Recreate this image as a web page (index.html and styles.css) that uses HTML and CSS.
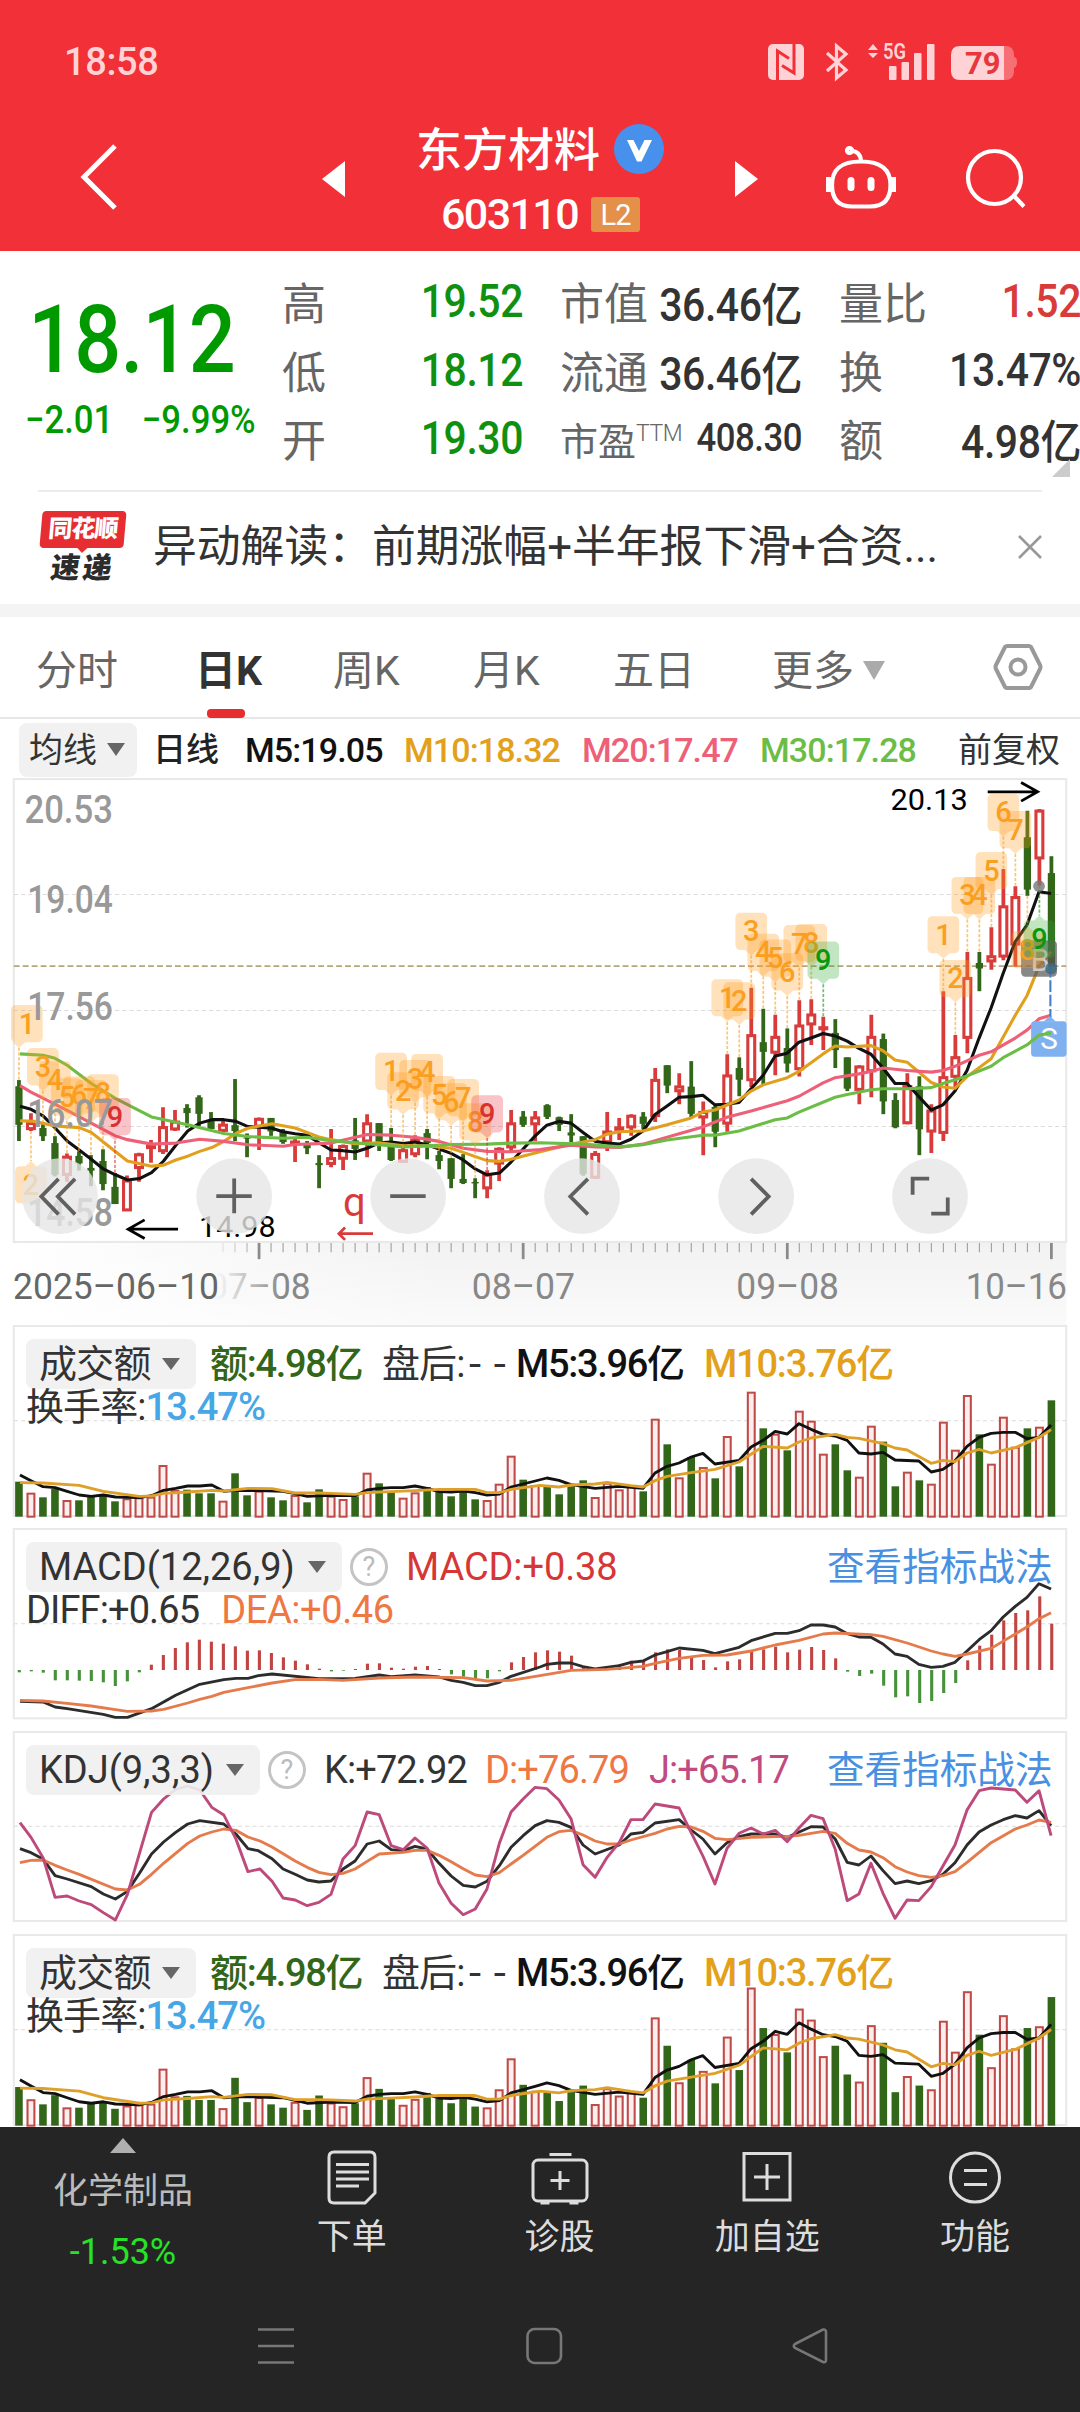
FILE: index.html
```html
<!DOCTYPE html>
<html lang="zh-CN">
<head>
<meta charset="utf-8">
<title>东方材料 603110</title>
<link rel="stylesheet" href="styles.css">
</head>
<body>
<header class="top">
  <div class="status">
    <span class="clock">18:58</span>
    <svg class="status-icons" width="252" height="40" viewBox="766 42 252 40">
      <g fill="#ffd3d6">
        <rect x="768" y="44" width="36" height="36" rx="5"/>
        <path d="M777.500 80V51L789 58.500M794 44V73L782 65.500" fill="none" stroke="#f13038" stroke-width="3"/>
        <path d="M827 53L846 70L836.500 78V46L846 54L827 71" fill="none" stroke="#ffd3d6" stroke-width="3.200"/>
        <path d="M868 50L873 44L878 50ZM868 53L873 58L878 53Z"/>
        <rect x="889" y="66" width="7.500" height="14" rx="1"/><rect x="901.500" y="62" width="7.500" height="18" rx="1"/><rect x="914" y="53" width="7.500" height="27" rx="1"/><rect x="927" y="44" width="7.500" height="36" rx="1"/>
        <path d="M1004 46h2q7 0 8 8v3q3 0 3 5t-3 6v4q-1 8-8 8h-2z" fill="#f56f75"/>
        <path d="M960 46h44v34h-44q-9 0-9-9v-16q0-9 9-9z"/>
        <text x="883" y="59" font-size="22" font-weight="600" textLength="23" lengthAdjust="spacingAndGlyphs">5G</text>
        <text x="965" y="74" font-size="31" font-weight="700" fill="#e8363e">79</text>
      </g>
    </svg>
  </div>
  <div class="titlebar">
    <svg class="back" width="40" height="70" viewBox="0 0 40 70"><path d="M35 4L4 35L35 66" fill="none" stroke="#fff" stroke-width="5"/></svg>
    <svg class="prev" width="23" height="36" viewBox="0 0 23 36"><path d="M23 0V36L0 18Z" fill="#fff"/></svg>
    <div class="stock">
      <div class="name">东方材料<svg width="50" height="50" viewBox="0 0 50 50"><circle cx="25" cy="25" r="25" fill="#4790ec"/><path d="M13 16H19.500L25 27L30.500 16H38L27.500 37.500H23Z" fill="#fff"/></svg></div>
      <div class="code"><span>603110</span><b>L2</b></div>
    </div>
    <svg class="next" width="23" height="36" viewBox="0 0 23 36"><path d="M0 0V36L23 18Z" fill="#fff"/></svg>
    <svg class="robot" width="72" height="68" viewBox="825 143 72 68" fill="none" stroke="#fff" stroke-width="4.200"><path d="M861 161.500C883 161.500 890.500 171 890.500 185C890.500 201 882 206.500 870 206.500H852C840 206.500 832 201 832 185C832 171 839 161.500 861 161.500ZM861 161C860.500 154 857 151 851 151"/><circle cx="849.500" cy="150.500" r="2.500"/><path d="M828.500 177v15M893.500 177v15" stroke-width="5"/><path d="M851 180.500v7M871 180.500v7" stroke-width="7" stroke-linecap="round"/></svg>
    <svg class="search" width="64" height="64" viewBox="963 146 64 64" fill="none" stroke="#fff" stroke-width="4.200"><circle cx="994.500" cy="177.500" r="26.500"/><path d="M1014 196L1024 206.500"/></svg>
  </div>
</header>

<section class="quote">
  <div class="price">
    <div class="last">18.12</div>
    <div class="delta"><span>−2.01</span><span>−9.99%</span></div>
  </div>
  <dl class="stats c1"><dt>高</dt><dd class="down">19.52</dd><dt>低</dt><dd class="down">18.12</dd><dt>开</dt><dd class="down">19.30</dd></dl>
  <dl class="stats c2"><dt>市值</dt><dd>36.46亿</dd><dt>流通</dt><dd>36.46亿</dd><dt class="small">市盈<sup>TTM</sup></dt><dd class="small">408.30</dd></dl>
  <dl class="stats c3"><dt>量比</dt><dd class="up">1.52</dd><dt>换</dt><dd>13.47%</dd><dt>额</dt><dd>4.98亿</dd></dl>
  <i class="corner"></i>
</section>

<section class="news">
  <div class="logo"><b>同花顺</b><i>速递</i></div>
  <p>异动解读：前期涨幅+半年报下滑+合资...</p>
  <svg width="24" height="24" viewBox="0 0 24 24"><path d="M1 1L23 23M23 1L1 23" stroke="#999" stroke-width="2.600"/></svg>
</section>

<nav class="tabs">
  <span>分时</span><span class="on">日K</span><span>周K</span><span>月K</span><span>五日</span><span>更多<i class="tri"></i></span>
  <svg width="50" height="48" viewBox="0 0 50 48" fill="none" stroke="#999" stroke-width="4"><path d="M14 3H36Q37 3 38 4L47 22Q48 24 47 26L38 44Q37 45 36 45H14Q13 45 12 44L3 26Q2 24 3 22L12 4Q13 3 14 3Z"/><circle cx="25" cy="24" r="7.500"/></svg>
</nav>

<div class="ma">
  <span class="chip">均线<i class="tri"></i></span>
  <span class="dk">日线</span><span class="n k">M5:19.05</span><span class="n o">M10:18.32</span><span class="n p">M20:17.47</span><span class="n g">M30:17.28</span><span class="fq">前复权</span>
</div>

<svg class="main" id="kline" width="1080" height="548" viewBox="0 23 3136 1591"></svg>

<section class="panel">
  <svg class="plot" data-chart="volume" viewBox="0 47 3136 570" preserveAspectRatio="none"></svg>
  <div class="row"><span class="chip">成交额<i class="tri"></i></span><span class="n dg a1">额:4.98亿</span><span class="a2">盘后:<em>--</em></span><span class="n k a3">M5:3.96亿</span><span class="n o a4">M10:3.76亿</span></div>
  <div class="row2"><span>换手率:</span><span class="n b">13.47%</span></div>
</section>

<section class="panel">
  <svg class="plot" data-chart="macd" viewBox="0 656 3136 570" preserveAspectRatio="none"></svg>
  <div class="row"><span class="chip wide">MACD(12,26,9)<i class="tri"></i></span><span class="help">?</span><span class="r m1">MACD:+0.38</span><a>查看指标战法</a></div>
  <div class="row2"><span>DIFF:+0.65</span><span class="or m2">DEA:+0.46</span></div>
</section>

<section class="panel">
  <svg class="plot" data-chart="kdj" viewBox="0 36 3136 570" preserveAspectRatio="none"></svg>
  <div class="row"><span class="chip mid">KDJ(9,3,3)<i class="tri"></i></span><span class="help">?</span><span class="k1">K:+72.92</span><span class="or k2">D:+76.79</span><span class="pu k3">J:+65.17</span><a>查看指标战法</a></div>
</section>

<section class="panel last-panel">
  <svg class="plot" data-chart="volume2" viewBox="0 47 3136 570" preserveAspectRatio="none"></svg>
  <div class="row"><span class="chip">成交额<i class="tri"></i></span><span class="n dg a1">额:4.98亿</span><span class="a2">盘后:<em>--</em></span><span class="n k a3">M5:3.96亿</span><span class="n o a4">M10:3.76亿</span></div>
  <div class="row2"><span>换手率:</span><span class="n b">13.47%</span></div>
</section>

<footer class="bottom">
  <div class="actions">
    <div class="sector"><i></i><span>化学制品</span><b>-1.53%</b></div>
    <div class="act"><svg width="60" height="60" viewBox="322 2147 60 60"><path d="M334 2152H370Q375 2152 375 2157V2193L365 2203H334Q329 2203 329 2198V2157Q329 2152 334 2152Z"/><path d="M336 2164.500H369M336 2172H369M336 2179H369M336 2186H359"/></svg><span>下单</span></div>
    <div class="act"><svg width="60" height="60" viewBox="529.500 2147 60 60"><rect x="532.500" y="2160" width="54" height="41" rx="5"/><path d="M549 2154.500H571M559.500 2171V2190M550 2180.500H569M540 2203H549M569 2203H578"/></svg><span>诊股</span></div>
    <div class="act"><svg width="60" height="60" viewBox="737 2147 60 60"><rect x="744" y="2153.500" width="46" height="46.500"/><path d="M767 2164V2190M754 2177H780"/></svg><span>加自选</span></div>
    <div class="act"><svg width="60" height="60" viewBox="945 2147 60 60"><circle cx="975" cy="2177.500" r="24.500"/><path d="M964 2170.500H987M964 2184.500H987"/></svg><span>功能</span></div>
  </div>
  <svg class="sys" width="1080" height="60" viewBox="0 2316 1080 60" fill="none" stroke="#777" stroke-width="2.600"><path d="M258 2329.500H294M258 2346H294M258 2362.500H294"/><rect x="527.500" y="2329" width="33.500" height="34" rx="7"/><path d="M795 2344L823 2329.500Q826 2329 826 2332V2360Q826 2363 823 2362L795 2348Q792.500 2346 795 2344Z"/></svg>
</footer>
<script src="charts.js"></script>
</body>
</html>
```
FILE: styles.css
```css
* { box-sizing: border-box; }
body { margin: 0; width: 1080px; height: 2412px; overflow: hidden; background: #fff; color: #333; font-family: Roboto, "Noto Sans CJK SC", sans-serif; }
svg { display: block; flex: none; }
b, i, em { font-style: normal; }
span { white-space: nowrap; }

.top { height: 251px; background: #f13038; color: #fff; }
.status { display: flex; justify-content: space-between; padding: 42px 62px 0 64px; height: 101px; }
.clock { font-size: 38px; line-height: 40px; color: #ffd3d6; font-weight: 500; letter-spacing: -.4px; }
.titlebar { display: flex; align-items: flex-start; }
.back { margin: 41px 0 0 80px; }
.prev { margin: 60px 0 0 202px; }
.stock { width: 390px; padding-left: 71px; }
.name { display: flex; align-items: center; gap: 12px; font-size: 46px; line-height: 54px; font-weight: 500; margin-top: 22px; }
.name svg { margin: -2px 0 0 2px; }
.code { display: flex; align-items: center; gap: 13px; padding-left: 25px; margin-top: 14px; height: 46px; }
.code span { font-size: 43px; font-weight: 500; letter-spacing: -1.600px; }
.code b { width: 49px; height: 35px; background: #e49048; border-radius: 3px; font-weight: 400; font-size: 29px; line-height: 36px; text-align: center; letter-spacing: -1px; }
.next { margin-top: 60px; }
.robot { margin: 42px 0 0 67px; }
.search { margin: 45px 0 0 66px; }

.quote { position: relative; display: flex; height: 241px; padding-top: 16px; }
.quote::after { content: ""; position: absolute; left: 38px; right: 38px; bottom: 0; height: 2px; background: #ebebeb; }
.price { width: 282px; color: #090; }
.last { font-size: 94px; line-height: 100px; font-weight: 500; letter-spacing: -1px; padding: 23px 0 0 32px; transform: scaleX(.88); transform-origin: 0 0; }
.delta { display: flex; gap: 32px; padding-left: 28px; font-size: 39px; line-height: 60px; font-weight: 500; width: 320px; transform: scaleX(.89); transform-origin: 0 0; }
.stats { margin: 0; display: grid; grid-template-columns: 44px 1fr; grid-auto-rows: 68.500px; align-items: center; font-size: 46px; }
.stats dt { color: #666; font-size: 44px; white-space: nowrap; }
.stats dd { margin: 0; text-align: right; font-weight: 500; letter-spacing: -.5px; white-space: nowrap; transform: scaleX(.89); transform-origin: 100% 0; }
.stats .down { color: #109010; }
.stats .up { color: #d93a3a; }
.stats dt.small { font-size: 38px; }
.stats dd.small { font-size: 39px; }
.stats sup { font-size: 23px; font-weight: 300; letter-spacing: -.5px; vertical-align: 14px; line-height: 0; }
.c1 { width: 241px; }
.c2 { width: 242px; margin-left: 37px; }
.c3 { width: 242px; margin: 0 -4px 0 37px; }
.corner { position: absolute; right: 10px; bottom: 15px; border: solid transparent; border-width: 0 0 18px 18px; border-bottom-color: #ccc; }

.news { display: flex; align-items: center; height: 125px; padding: 0 38px 0 39px; border-bottom: 13px solid #f4f4f4; }
.logo { width: 88px; display: flex; flex-direction: column; align-items: center; }
.logo b { position: relative; width: 84px; height: 37px; background: #e62e32; border-radius: 4px; transform: skewX(-5deg); color: #fff; font-size: 24px; line-height: 36px; font-weight: 900; text-align: center; letter-spacing: -1px; }
.logo b::after { content: ""; position: absolute; left: 37px; top: 36px; border: solid transparent; border-width: 6px 6px 0; border-top-color: #e62e32; }
.logo i { font-size: 29px; line-height: 34px; margin-top: 3px; font-weight: 900; letter-spacing: 3px; transform: skewX(-8deg); color: #2c2c2c; }
.news p { margin: 0 auto 2px 26px; font-size: 43.800px; line-height: 60px; white-space: nowrap; }
.news svg { margin-bottom: 2px; }

.tri { display: inline-block; border: solid transparent; border-width: 13px 9.500px 0; border-top-color: #666; }
.tabs { display: flex; align-items: center; height: 102px; border-bottom: 2px solid #e6e6e6; padding: 0 37px 0 36px; font-size: 41px; color: #666; }
.tabs span { position: relative; width: 140px; }
.tabs span:first-child { width: 159px; }
.tabs span:nth-child(2) { width: 138px; }
.tabs span:nth-child(5) { width: 159px; }
.tabs span:nth-child(6) { width: auto; }
.tabs svg { margin-left: auto; margin-top: 0; }
.tabs .on { font-weight: 700; color: #333; }
.tabs .on::after { content: ""; position: absolute; left: 12px; bottom: -21px; width: 38px; height: 9px; border-radius: 4px; background: #e62e30; }
.tabs .tri { border-width: 19px 11.500px 0; border-top-color: #aaa; margin-left: 9px; vertical-align: 5px; }

.ma { display: flex; align-items: center; height: 59px; padding: 2px 20px 0 19px; font-size: 34px; line-height: 50px; }
.chip { display: inline-flex; align-items: center; justify-content: space-between; background: rgba(239, 239, 239, .9); border-radius: 8px; }
.ma .chip { width: 118px; height: 54px; padding: 0 12px 0 10px; }
.ma .dk { margin-left: 16px; width: 92px; font-weight: 500; color: #222; font-size: 33px; }
.n { font-weight: 500; }
.ma .n { width: 178px; letter-spacing: -.9px; }
.ma .n.k { width: 159px; }
.ma .fq { margin-left: auto; }
.k { color: #111; } .o { color: #e3a01b; } .p { color: #ee6078; } .g { color: #6cbd45; }
.dg { color: #326619; } .b { color: #46a6e6; } .r { color: #d63636; } .or { color: #ee7744; } .pu { color: #c14a80; }

.panel { position: relative; height: 190px; margin-bottom: 13px; font-size: 38px; letter-spacing: -.9px; }
.plot { position: absolute; left: 0; top: 0; width: 1080px; height: 190px; overflow: visible; }
.row { position: relative; display: flex; align-items: center; height: 50px; top: 13px; margin-left: 26px; line-height: 50px; }
.row .chip { width: 170px; height: 50px; padding: 0 16px 0 13px; letter-spacing: -.8px; }
.row .chip.wide { width: 316px; letter-spacing: 0; }
.row .chip.mid { width: 234px; letter-spacing: 0; }
.row .tri { border-width: 12px 9px 0; }
.row2 { position: relative; display: flex; top: 12px; height: 38px; line-height: 38px; margin-left: 26px; }
.row .a1 { margin-left: 14px; width: 172px; }
.a2 { width: 134px; }
.a2 em { letter-spacing: 11px; margin-left: 4px; display: inline-block; transform: scaleX(1.15); transform-origin: 0 0; }
.a3 { width: 188px; letter-spacing: -1.300px; }
.a4 { letter-spacing: -1.200px; }
.a1 { letter-spacing: -1.300px; }
.help { width: 38px; height: 38px; margin-left: 8px; border: 3px solid #c4c4c4; border-radius: 50%; font-size: 27px; line-height: 32px; text-align: center; color: #bbb; letter-spacing: 0; }
.m1 { margin-left: 18px; letter-spacing: -.1px; }
.m2 { margin-left: 22px; letter-spacing: -.4px; }
.k1 { margin-left: 18px; width: 161px; }
.k2 { width: 164px; }
.row a { color: #4a90e2; position: absolute; left: 801px; font-size: 37.600px; letter-spacing: 0; }
.last-panel { margin-bottom: 2px; }

.bottom { position: relative; height: 285px; background: #252525; color: #ddd; font-size: 35px; }
.actions { display: flex; }
.sector { width: 246px; display: flex; flex-direction: column; align-items: center; color: #bbb; }
.sector i { margin-top: 11px; border: solid transparent; border-width: 0 13px 15px; border-bottom-color: #b0b0b0; }
.sector span { line-height: 50px; margin-top: 14px; }
.sector b { color: #27e327; font-weight: 400; font-size: 36px; line-height: 44px; margin-top: 13px; }
.act { width: 207.700px; display: flex; flex-direction: column; align-items: center; padding-top: 20px; position: relative; left: 2px; }
.act svg { fill: none; stroke: #ddd; stroke-width: 3; }
.act span { line-height: 50px; margin-top: 6px; }
.sys { margin-top: 42px; }
```
FILE: charts.js
```js
// All series use one shared coordinate grid: a trading day is STEP wide.
const STEP = 34.86, X0 = 55;
const x = i => X0 + STEP * i;
const RED = '#d93b3b', GREEN = '#326619';

// high, body top, body bottom, low, direction (1 = rise)
const candles = [
[900,918,1030,1077,0],[996,1024,1043,1048,1],[1025,1039,1063,1077,0],[1063,1083,1175,1180,0],[1113,1122,1176,1195,1],[1107,1120,1142,1163,0],[1118,1155,1163,1208,0],[1101,1135,1202,1220,0],[1170,1210,1260,1260,0],[1177,1191,1279,1280,1],
[1111,1115,1156,1195,1],[1074,1090,1098,1140,1],[979,1036,1107,1115,1],[987,1020,1044,1048,1],[970,981,996,1038,0],[944,950,998,1034,0],[993,1019,1042,1042,0],[1019,1029,1048,1052,1],[897,1031,1048,1077,0],[1055,1067,1070,1124,0],
[1009,1012,1036,1103,1],[1010,1010,1049,1062,0],[1042,1048,1080,1085,0],[1066,1078,1082,1138,1],[1077,1083,1098,1115,0],[1118,1141,1147,1214,0],[1042,1126,1144,1153,1],[1087,1091,1129,1161,1],[1010,1075,1100,1132,0],[999,1025,1079,1124,1],
[1025,1025,1083,1106,0],[1039,1083,1132,1135,0],[1095,1103,1138,1141,1],[1060,1072,1116,1124,1],[1042,1054,1083,1130,0],[1106,1118,1135,1159,0],[1127,1127,1187,1214,0],[1115,1187,1199,1202,0],[1185,1196,1200,1243,0],[1162,1174,1215,1243,1],
[1095,1099,1143,1193,1],[987,1025,1096,1109,1],[990,1006,1030,1036,0],[990,1008,1029,1077,1],[970,973,1007,1013,0],[1006,1008,1030,1048,0],[999,1052,1061,1080,0],[1063,1063,1173,1178,0],[1106,1114,1184,1187,1],[993,1049,1081,1106,1],
[1010,1037,1045,1074,1],[999,1003,1038,1062,1],[993,1006,1027,1042,0],[865,899,1005,1022,1],[857,857,916,938,0],[880,918,933,970,1],[845,919,998,1008,0],[962,992,1009,1118,1],[970,978,1050,1095,0],[825,886,1027,1050,1],
[834,865,899,947,0],[632,769,901,920,1],[693,790,818,915,0],[710,774,821,886,1],[750,807,852,878,0],[668,741,869,890,1],[665,709,739,798,1],[716,746,752,813,1],[723,763,813,865,0],[834,834,925,932,0],
[857,860,929,970,1],[710,774,875,950,1],[765,781,962,999,0],[938,958,1037,1040,0],[880,917,1026,1028,1],[889,918,1043,1118,0],[970,988,1050,1112,1],[642,891,1054,1077,1],[769,833,891,920,1],[528,603,778,822,1],
[528,560,576,642,0],[456,540,556,580,1],[287,395,542,552,1],[337,368,507,571,1],[118,195,347,365,0],[113,117,257,335,1],[250,299,568,568,0]];

const vol = [514,548,561,536,570,570,560,552,573,565,562,560,465,540,538,549,549,572,489,555,542,561,570,555,576,537,557,567,558,488,519,546,563,547,530,545,558,545,567,570,521,437,508,525,530,552,528,510,561,518,538,528,543,326,402,502,440,471,504,378,468,245,354,371,420,302,332,431,402,480,500,347,394,528,485,510,521,335,419,255,372,461,320,410,354,350,270];
const macd = [1086,1083,1087,1110,1110,1111,1112,1116,1127,1113,1086,1063,1034,1013,996,988,994,1000,1008,1021,1020,1028,1041,1051,1062,1075,1083,1081,1076,1060,1059,1072,1075,1069,1067,1076,1092,1099,1104,1104,1083,1056,1040,1026,1020,1024,1036,1070,1077,1075,1062,1051,1052,1026,1017,1019,1042,1049,1071,1053,1047,1023,1017,1009,1026,1018,1010,1019,1044,1084,1097,1090,1126,1161,1158,1178,1172,1148,1118,1050,1006,973,930,908,900,858,940];

const lines = {
m5: '58,976 90,985 125,1004 160,1039 195,1077 230,1103 265,1130 300,1158 335,1175 370,1190 405,1186 440,1169 475,1135 510,1090 545,1048 580,1025 615,1015 650,1015 685,1020 720,1035 750,1037 790,1040 822,1050 857,1056 892,1060 926,1082 961,1103 996,1105 1031,1109 1066,1098 1101,1082 1136,1080 1171,1084 1205,1080 1240,1088 1275,1100 1310,1113 1345,1132 1380,1158 1414,1175 1450,1170 1484,1138 1519,1100 1554,1062 1588,1031 1623,1020 1658,1025 1693,1052 1728,1078 1763,1083 1798,1086 1832,1072 1867,1048 1902,1000 1937,975 1972,950 2007,948 2041,944 2076,972 2111,970 2146,965 2181,925 2216,886 2251,830 2286,822 2320,790 2355,778 2390,765 2425,772 2460,787 2494,808 2529,825 2564,865 2599,910 2634,910 2668,948 2704,987 2738,972 2773,932 2808,872 2843,778 2878,690 2913,590 2948,498 2982,450 3017,353 3052,358',
m10: '58,1018 100,1020 160,1033 230,1038 265,1052 300,1080 370,1135 440,1150 475,1147 510,1132 545,1121 580,1107 615,1096 650,1078 685,1055 720,1040 750,1034 790,1027 857,1039 926,1065 961,1073 1031,1085 1101,1082 1171,1091 1240,1091 1310,1098 1345,1110 1414,1134 1450,1136 1484,1130 1568,1108 1658,1086 1693,1080 1728,1073 1763,1057 1798,1050 1867,1048 1937,1030 2007,1010 2041,993 2076,987 2146,958 2181,932 2216,914 2286,893 2320,875 2390,824 2425,801 2460,804 2529,800 2564,815 2599,842 2634,848 2704,907 2738,920 2773,924 2808,890 2878,838 2948,712 2982,655 3017,570 3052,527',
m20: '58,916 90,935 195,988 335,1062 370,1073 440,1086 510,1083 580,1072 650,1078 720,1088 822,1092 857,1087 961,1083 1066,1058 1136,1060 1205,1066 1275,1078 1345,1098 1414,1107 1484,1108 1568,1102 1658,1089 1728,1094 1798,1096 1867,1086 1972,1056 2041,1036 2111,1008 2181,990 2286,960 2320,947 2390,908 2425,893 2494,882 2529,875 2564,865 2634,872 2704,877 2738,872 2773,860 2843,828 2878,818 2948,778 2982,755 3017,722 3052,712',
m30: '58,824 125,828 160,837 195,857 265,910 335,953 440,1007 545,1030 650,1055 720,1064 822,1069 892,1066 961,1076 1066,1085 1171,1094 1240,1091 1310,1087 1414,1086 1484,1083 1568,1082 1693,1086 1798,1094 1867,1088 1937,1074 2041,1060 2076,1060 2146,1048 2251,1015 2286,1010 2320,993 2425,950 2460,942 2529,928 2564,925 2634,925 2704,922 2738,910 2808,888 2878,860 2913,835 2982,798 3017,770 3052,763',
v5: '58,494 90,511 125,529 160,532 195,543 230,554 265,558 300,554 335,560 405,562 440,556 475,540 510,534 545,527 580,527 615,524 650,543 685,540 750,541 822,543 857,550 892,558 961,555 1031,556 1066,539 1101,534 1136,532 1171,532 1205,527 1240,534 1275,544 1310,545 1345,542 1380,547 1414,554 1450,551 1484,530 1554,512 1588,503 1623,510 1658,523 1728,534 1798,528 1867,534 1902,488 1937,468 1972,458 2007,440 2041,429 2076,461 2146,450 2181,410 2216,390 2251,363 2286,371 2320,340 2355,357 2390,372 2425,377 2460,390 2494,428 2529,431 2564,426 2599,449 2668,452 2704,485 2738,477 2773,452 2808,408 2843,381 2878,369 2913,366 2948,366 2982,385 3017,381 3052,344',
v10: '58,517 125,518 230,525 300,543 405,558 440,557 475,549 545,545 615,540 650,542 720,534 790,535 857,548 926,548 961,549 1031,552 1066,547 1136,544 1205,541 1275,537 1380,537 1414,547 1450,547 1484,537 1568,525 1623,530 1658,524 1728,521 1763,516 1832,526 1867,530 1902,511 1937,498 2007,487 2076,477 2146,455 2216,408 2286,413 2320,395 2355,383 2425,372 2460,381 2494,384 2564,400 2599,413 2634,419 2704,459 2738,450 2773,454 2808,428 2843,417 2878,428 2948,412 3017,381 3052,358',
diff: '58,1173 125,1175 160,1190 195,1195 300,1212 335,1221 370,1221 440,1195 510,1155 580,1122 650,1108 685,1104 720,1104 750,1096 790,1091 926,1105 1031,1104 1101,1094 1136,1099 1205,1094 1275,1100 1310,1110 1345,1116 1380,1126 1414,1126 1450,1116 1484,1098 1568,1070 1588,1062 1623,1058 1658,1058 1693,1069 1728,1076 1798,1066 1832,1056 1867,1052 1902,1034 1937,1024 1972,1013 2041,1020 2076,1030 2146,1011 2181,991 2251,969 2286,969 2320,961 2355,944 2390,944 2425,950 2460,970 2494,980 2529,981 2564,1001 2599,1031 2634,1038 2668,1062 2704,1071 2738,1068 2773,1056 2808,1022 2843,988 2878,961 2913,920 2948,888 2982,861 3017,820 3052,836',
dea: '58,1170 125,1172 195,1179 265,1187 335,1198 370,1203 440,1202 475,1197 545,1178 580,1167 615,1158 650,1146 720,1132 790,1118 857,1108 926,1107 996,1110 1101,1103 1205,1100 1345,1102 1414,1112 1484,1110 1568,1096 1658,1080 1763,1077 1867,1068 1902,1059 1972,1044 2041,1035 2111,1034 2181,1022 2251,1004 2320,990 2390,971 2425,968 2529,973 2564,978 2634,998 2704,1022 2738,1031 2773,1038 2808,1031 2878,1014 2982,950 3017,925 3052,907',
k: '58,386 90,398 125,417 160,467 195,477 265,500 300,522 335,537 370,514 405,460 440,402 475,366 510,337 545,312 580,302 650,312 685,342 720,386 750,392 790,416 822,447 857,463 892,480 926,486 961,483 996,447 1031,423 1066,372 1101,363 1136,389 1171,392 1205,379 1240,387 1275,430 1310,468 1345,496 1380,501 1414,484 1450,437 1484,382 1519,347 1554,317 1588,302 1623,307 1658,322 1693,375 1728,402 1798,375 1832,342 1867,337 1902,309 1972,299 2007,330 2041,357 2076,402 2111,368 2146,350 2181,342 2251,342 2286,352 2355,320 2390,321 2425,357 2460,427 2494,435 2529,408 2564,452 2599,491 2634,483 2668,491 2704,482 2738,463 2773,428 2808,375 2843,336 2878,315 2913,299 2948,287 2982,294 3017,272 3052,317',
d: '58,428 90,421 125,420 160,436 195,450 230,463 335,507 370,510 405,493 440,463 475,430 510,400 545,370 580,348 615,336 650,327 685,331 720,351 755,363 790,381 857,423 892,442 926,457 961,464 996,460 1031,447 1066,424 1101,402 1171,397 1205,391 1240,391 1275,406 1310,425 1345,446 1380,465 1414,470 1450,458 1484,432 1519,406 1588,352 1623,335 1658,331 1693,345 1728,363 1763,372 1798,372 1832,360 1902,340 1937,327 1972,319 2007,321 2041,334 2076,355 2111,359 2181,352 2251,350 2286,350 2320,346 2390,334 2425,340 2460,370 2494,390 2529,396 2564,413 2599,440 2634,456 2668,467 2704,472 2738,467 2773,455 2808,427 2878,368 2948,327 2982,315 3017,300 3052,307',
j: '58,308 90,352 125,413 160,532 195,528 230,543 265,554 300,578 335,600 370,523 405,400 440,277 475,237 510,208 545,198 580,210 615,262 650,285 685,357 720,455 755,447 790,484 822,534 857,540 892,557 926,547 961,523 996,417 1031,377 1066,276 1101,284 1136,377 1171,389 1205,354 1240,384 1275,490 1310,550 1345,584 1380,567 1414,507 1450,370 1484,276 1519,237 1554,202 1588,206 1623,240 1658,296 1693,434 1728,472 1763,412 1798,368 1832,299 1867,299 1902,252 1972,264 2007,338 2041,408 2076,492 2111,385 2146,340 2181,324 2216,342 2251,331 2286,365 2320,324 2355,286 2390,296 2425,387 2460,542 2494,522 2529,430 2564,520 2599,595 2634,540 2668,542 2704,500 2738,438 2773,375 2808,270 2843,212 2878,204 2948,210 2982,247 3017,212 3052,347'
};

const line = (pts, color, w = 8.5) => `<polyline points="${pts}" fill="none" stroke="${color}" stroke-width="${w}" stroke-linejoin="round"/>`;
const dash = (y, color = '#dcdcdc', d = '12 9', w = 3) => `<path d="M40 ${y}H3096" stroke="${color}" stroke-width="${w}" stroke-dasharray="${d}"/>`;
const frame = (y, h) => `<rect x="40" y="${y}" width="3056" height="${h}" fill="none" stroke="#e9e9e9" stroke-width="6"/>`;
const text = (s, px, py, w, size, color, extra = '') => `<text x="${px}" y="${py}" textLength="${w}" lengthAdjust="spacingAndGlyphs" font-size="${size}" fill="${color}" ${extra}>${s}</text>`;

function candle([hi, top, bot, low, up], i) {
  const c = x(i), color = up ? RED : GREEN;
  if (!up) return `<path d="M${c} ${hi}V${low}" stroke="${color}" stroke-width="11"/><rect x="${c - 10.5}" y="${top}" width="21" height="${bot - top}" fill="${color}"/>`;
  return `<path d="M${c} ${hi}V${top}M${c} ${bot}V${low}" stroke="${color}" stroke-width="11"/><rect x="${c - 10}" y="${top + 2}" width="20" height="${Math.max(bot - top - 4, 3)}" fill="#fff" stroke="${color}" stroke-width="9"/>`;
}

const TAGS = { o: ['#ff9d1e', '#f9a022'], r: ['#e83a44', '#d93030'], g: ['#35a835', '#0b970b'] };
function tag(i, n, kind = 'o', below = false) {
  const [hi, , , low] = candles[i], [bg, fg] = TAGS[kind];
  const tip = x(i), c = Math.max(tip, 78);
  const y = below ? low + 102 : hi - 218;
  const arrow = below ? `M${tip - 16} ${y}L${tip} ${y - 15}L${tip + 16} ${y}Z` : `M${tip - 18} ${y + 108}L${tip} ${y + 124}L${tip + 18} ${y + 108}Z`;
  const stem = below ? `M${tip} ${low}V${y - 15}` : `M${tip} ${y + 124}V${hi}`;
  return `<path d="${stem}" stroke="${fg}" stroke-opacity=".6" stroke-width="5" stroke-dasharray="9 5"/>
    <g fill="${bg}" fill-opacity=".3"><rect x="${c - 46}" y="${y}" width="92" height="108" rx="14"/><path d="${arrow}"/></g>
    <text x="${c}" y="${y + 83}" text-anchor="middle" font-size="84" font-weight="500" fill="${fg}">${n}</text>`;
}

function kline() {
  let s = `<defs><linearGradient id="strip" x1="0" x2="1" y1="0" y2="0"><stop offset="0" stop-color="#f2f2f2" stop-opacity="0"/><stop offset=".4" stop-color="#f2f2f2"/></linearGradient><linearGradient id="fade" x1="0" x2="0" y1="0" y2="1"><stop offset="0" stop-color="#fff" stop-opacity="0"/><stop offset="1" stop-color="#fff" stop-opacity=".65"/></linearGradient><linearGradient id="wipe" x1="0" x2="1" y1="0" y2="0"><stop offset=".12" stop-color="#fafafa"/><stop offset="1" stop-color="#f6f6f6" stop-opacity="0"/></linearGradient></defs>`;
  s += `<rect x="40" y="1373" width="3056" height="243" fill="url(#strip)"/><rect x="40" y="1373" width="3056" height="243" fill="url(#fade)"/>`;
  s += frame(26, 1344) + dash(361) + dash(698) + dash(1035) + dash(569, '#b9a47c', '17 9', 5);
  s += candles.map(candle).join('');
  s += line(lines.m5, '#111', 9) + line(lines.m10, '#e0a01e', 9) + line(lines.m20, '#ee6078', 9) + line(lines.m30, '#6cbd45', 9);
  s += '<rect x="2965" y="495" width="104" height="105" rx="12" fill="#555" fill-opacity=".7"/><text x="3020" y="584" font-size="90" text-anchor="middle" fill="#ccc">B</text>';
  for (let n = 3; n <= 8; n++) s += tag(n - 1, n);
  s += tag(0, 1) + tag(1, 2, 'o', true) + tag(8, 9, 'r');
  for (let n = 1; n <= 9; n++) s += tag(30 + n, n, n > 8 ? 'r' : 'o') + tag(58 + n, n, n > 8 ? 'g' : 'o');
  for (let n = 1; n <= 7; n++) s += tag(76 + n, n);
  s += tag(84, 8, 'o', true) + tag(85, 9, 'g', true) + '<circle cx="3017" cy="337" r="17" fill="#777" fill-opacity=".8"/>';
  s += '<path d="M3050 568V722" stroke="#3f7fc9" stroke-width="6" stroke-dasharray="34 8"/><circle cx="3052" cy="576" r="17" fill="#3d6a80" fill-opacity=".8"/><path d="M3030 730L3048 714L3066 730Z" fill="#7fb1f0"/><rect x="2994" y="729" width="103" height="103" rx="10" fill="#7fb1f0"/><text x="3046" y="811" font-size="86" text-anchor="middle" fill="#fff">S</text>';
  s += line('2994,788 3017,770 3052,763', '#6cbd45', 9);
  [['20.53', 77, 153], ['19.04', 85, 415], ['17.56', 85, 725], ['16.07', 85, 1036], ['14.58', 85, 1323]].forEach(([t, px, py]) => { s += text(t, px - 6, py, 334 - px, 112, '#999', 'font-weight="500"'); });
  s += text('14.98', 578, 1357, 222, 86, '#000') + text('20.13', 2586, 115, 224, 86, '#000');
  s += '<g fill="none" stroke="#000" stroke-width="8"><path d="M517 1333H372M420 1306L372 1333L420 1360"/><path d="M2868 63H3013M2965 36L3013 63L2965 90"/></g>';
  s += text('q', 996, 1294, 66, 116, RED, 'font-weight="400"') + `<path d="M1083 1346H984M1002 1328L984 1346L1002 1364" fill="none" stroke="${RED}" stroke-width="8"/>`;
  for (let i = 17; i <= 86; i++) {
    const major = [20, 42, 64, 86].includes(i), fade = i < 20 ? (i - 16) / 4 : 1;
    s += `<path d="M${x(i)} 1373V${major ? 1420 : 1400}" stroke="${major ? '#8a8a8a' : '#999'}" stroke-opacity="${fade}" stroke-width="${major ? 8 : 3}"/>`;
  }
  // Date labels: digits are spaced apart and the separators are long dashes.
  const date = (parts, color) => parts.map(([t, px, w]) => text(t, px, 1535, w, 106, color, 'font-weight="450"')).join('');
  s += date([['07–08', 604, 298]], '#888') + '<rect x="600" y="1440" width="220" height="110" fill="url(#wipe)"/>';
  s += date([['2025–06–10', 38, 598]], '#666') + date([['08–07', 1370, 300], ['09–08', 2138, 298], ['10–16', 2804, 294]], '#888');
  const icons = ['M170 1187L120 1238L170 1290M218 1187L168 1238L218 1290', 'M628 1237H731M680 1186V1287', 'M1133 1237H1236', 'M1707 1187L1656 1238L1707 1290', 'M2181 1187L2232 1238L2181 1290', 'M2698 1186H2650V1233M2752 1241V1288H2704'];
  [174, 680, 1185, 1690, 2195.5, 2700.5].forEach((c, i) => { s += `<circle cx="${c}" cy="1237" r="110" fill="#e6e6e6" fill-opacity=".8"/><path d="${icons[i]}" fill="none" stroke="#606060" stroke-width="11"/>`; });
  return s;
}

function volume(k) {
  const base = 617, f = v => base - (base - v) * k;
  const scale = pts => pts.split(' ').map(p => { const [a, b] = p.split(','); return a + ',' + f(+b).toFixed(1); }).join(' ');
  let s = frame(47, 570) + dash(331);
  s += vol.map((v, i) => candles[i][4]
    ? `<rect x="${x(i) - 10}" y="${f(v) + 2}" width="20" height="${base - f(v)}" fill="#fdeeee" stroke="#bf4a48" stroke-width="6"/>`
    : `<rect x="${x(i) - 11}" y="${f(v)}" width="22" height="${base - f(v) + 2}" fill="${GREEN}"/>`).join('');
  return s + line(scale(lines.v5), '#111') + line(scale(lines.v10), '#dfa02a');
}

const charts = {
  volume: () => volume(1),
  volume2: () => volume(1.106),
  macd: () => frame(656, 568) + dash(940) + macd.map((v, i) => `<path d="M${x(i) + 1} 1079V${v}" stroke="${v > 1079 ? '#46913a' : '#bf4442'}" stroke-width="9"/>`).join('') + line(lines.diff, '#2c2c2c') + line(lines.dea, '#e57a4b'),
  kdj: () => frame(36, 567) + dash(319) + line(lines.k, '#2c2c2c') + line(lines.d, '#e57a4b') + line(lines.j, '#be4a7c')
};

document.getElementById('kline').innerHTML = kline();
document.querySelectorAll('[data-chart]').forEach(el => { el.innerHTML = charts[el.dataset.chart](); });
```
